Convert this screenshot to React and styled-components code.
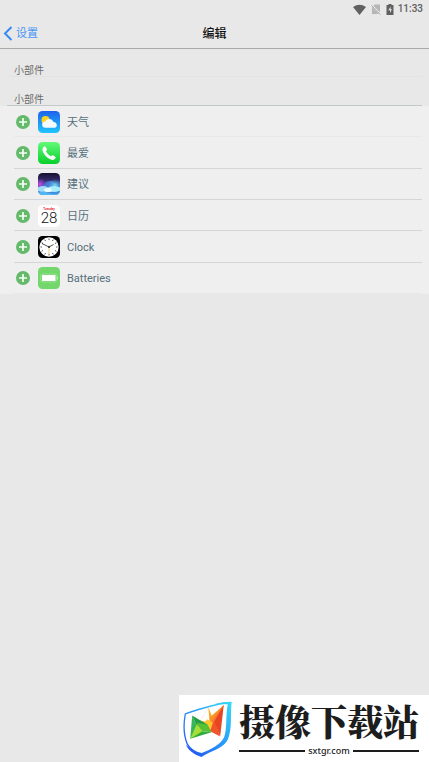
import React from 'react';
import styled, { createGlobalStyle } from 'styled-components';

const GlobalStyle = createGlobalStyle`
  * {
    box-sizing: border-box;
  }
  body {
    margin: 0;
    background: #e8e8e8;
    font-family: Roboto, "Noto Sans CJK SC", sans-serif;
  }
`;

const PageWrapper = styled.div`
  display: flex;
  flex-direction: column;
  width: 100%;
  min-height: 100vh;
`;

const StatusBar = styled.div`
  display: flex;
  align-items: center;
  justify-content: flex-end;
  height: 18px;
  padding-right: 6px;
  color: #606060;
  svg {
    display: block;
  }
`;

const StatusIcons = styled.div`
  display: flex;
  align-items: center;
  gap: 5px;
  margin-right: 4px;
`;

const Time = styled.span`
  font-size: 10px;
  font-weight: 500;
  line-height: 16px;
`;

const Header = styled.header`
  display: grid;
  grid-template-columns: 1fr auto 1fr;
  align-items: center;
  height: 31px;
  border-bottom: 1px solid #a9aaa9;
`;

const BackButton = styled.button`
  display: flex;
  align-items: center;
  justify-self: start;
  gap: 3px;
  padding: 0 0 0 3px;
  border: 0;
  background: none;
  color: #4897f5;
  font-family: inherit;
  font-size: 11px;
  line-height: 16px;
`;

const BackLabel = styled.span`
  padding-top: 2px;
`;

const Title = styled.h1`
  margin: 0;
  padding-top: 2px;
  color: #111;
  font-size: 12px;
  font-weight: 500;
  line-height: 16px;
`;

const SectionTitle = styled.h2`
  display: flex;
  align-items: flex-end;
  height: ${(props) => (props.$last ? 29 : 28)}px;
  margin: 0 7px;
  padding-left: 7px;
  border-bottom: 1px solid ${(props) => (props.$last ? '#c0caca' : '#e3e3e3')};
  color: #6b6b6b;
  font-size: 10px;
  font-weight: 400;
  line-height: 10px;
`;

const WidgetList = styled.ul`
  display: grid;
  grid-auto-rows: 1fr;
  min-height: 188px;
  margin: 0;
  padding: 0 7px 0 14px;
  background: #efefef;
  list-style: none;
`;

const WidgetRow = styled.li`
  display: flex;
  align-items: center;
  padding-top: 1px;
  border-bottom: 1px solid ${(props) => (props.$faint ? '#e8e8e8' : '#d3d6d8')};
`;

const WidgetName = styled.span`
  padding-top: 2px;
  color: #56707c;
  font-size: 11px;
  line-height: 16px;
`;

const AddButton = styled.button`
  display: flex;
  margin-right: 8px;
  padding: 0 0 0 2px;
  border: 0;
  background: none;
`;

const WidgetIcon = styled.svg`
  width: 22px;
  height: 22px;
  margin-right: 7px;
`;

const Banner = styled.aside`
  position: fixed;
  right: 0;
  bottom: 0;
  display: flex;
  align-items: center;
  gap: 7px;
  height: 67px;
  padding: 0 10px 0 4px;
  background: #fff;
  color: #1d1d1d;
`;

const BannerText = styled.div`
  display: flex;
  flex-direction: column;
  align-self: flex-start;
`;

const BannerName = styled.div`
  font-family: "Noto Serif CJK SC", "Noto Sans CJK SC", serif;
  font-size: 36px;
  font-weight: 900;
  line-height: 51px;
`;

const BannerSite = styled.div`
  display: flex;
  align-items: center;
  gap: 3px;
  font-family: "Noto Sans", sans-serif;
  font-size: 9px;
  font-weight: 500;
  line-height: 10px;
  &::before,
  &::after {
    content: "";
    flex: 1;
    height: 2px;
    background: #1d1d1d;
  }
`;

function Wifi() {
  return (
    <svg width="13" height="11" viewBox="0 0 13 11">
      <path d="M0 3Q6.500-1.500 13 3L6.500 11Z" fill="currentColor" />
    </svg>
  );
}

function NoSim() {
  return (
    <svg width="10" height="11" viewBox="0 0 10 11">
      <path d="M3.500.5H9V10H1V3Z" fill="#b5b5b5" />
      <path d="M0 .5L9.500 10.500" stroke="#e8e8e8" strokeWidth="2" />
      <path d="M.5 1.500L9 10.500" stroke="#a2a2a2" strokeWidth="1" />
    </svg>
  );
}

function Battery() {
  return (
    <svg width="8" height="11" viewBox="0 0 8 11">
      <path d="M2.500 0h3v1H7.500v10H.5V1h2z" fill="currentColor" />
      <path d="M4.700 2.500L2.300 6.300H4V9L5.900 5.200H4.500Z" fill="#e8e8e8" />
    </svg>
  );
}

function Plus() {
  return (
    <svg width="14" height="14" viewBox="0 0 14 14">
      <circle cx="7" cy="7" r="7" fill="#64b96a" />
      <path d="M7 3v8M3 7h8" stroke="#f5fff5" strokeWidth="1.700" />
    </svg>
  );
}

function Weather() {
  return (
    <>
      <defs>
        <linearGradient id="sky" x2="0" y2="1">
          <stop stopColor="#1d62ed" />
          <stop offset="1" stopColor="#1fc6fd" />
        </linearGradient>
      </defs>
      <rect width="22" height="22" rx="4.500" fill="url(#sky)" />
      <circle cx="7.500" cy="9" r="4" fill="#ffd21c" />
      <path d="M7.500 16.800a3.200 3.200 0 0 1-.3-6.400 4.600 4.600 0 0 1 8.300.5 3 3 0 0 1 1 5.900z" fill="#f3fbff" />
    </>
  );
}

function Phone() {
  return (
    <>
      <defs>
        <linearGradient id="call" x2="0" y2="1">
          <stop stopColor="#62fb78" />
          <stop offset="1" stopColor="#08cf2b" />
        </linearGradient>
      </defs>
      <rect width="22" height="22" rx="4.500" fill="url(#call)" />
      <path
        d="M5 5.500Q6.500 3.700 7.500 4.700L9 7.300Q9.200 8.300 7.800 9.200Q9.600 12.500 13 14.500Q14 13 15 13.300L17.500 15Q18.300 15.800 16.500 17.300C14 19 10.500 16.700 8.300 14.500C5.500 11.700 3.500 8 5 5.500Z"
        fill="#fff"
      />
    </>
  );
}

function Siri() {
  return (
    <>
      <defs>
        <linearGradient id="night" x2="0" y2="1">
          <stop stopColor="#15112f" />
          <stop offset=".3" stopColor="#302861" />
          <stop offset=".6" stopColor="#4f62bd" />
          <stop offset="1" stopColor="#3f9ce8" />
        </linearGradient>
        <radialGradient id="pink">
          <stop stopColor="#d644e4" />
          <stop offset="1" stopColor="#8a3bd0" stopOpacity="0" />
        </radialGradient>
        <radialGradient id="cyan">
          <stop stopColor="#6ce0f0" />
          <stop offset="1" stopColor="#4a9ae0" stopOpacity="0" />
        </radialGradient>
        <clipPath id="tile">
          <rect width="22" height="22" rx="4.500" />
        </clipPath>
      </defs>
      <g clipPath="url(#tile)">
        <rect width="22" height="22" fill="url(#night)" />
        <ellipse cx="2" cy="11" rx="6" ry="6" fill="url(#pink)" />
        <path d="M5 14Q7 7 13 8Q18 9 19 15Z" fill="#4b7fe0" opacity=".8" />
        <ellipse cx="17" cy="12" rx="8" ry="6" fill="url(#cyan)" />
        <ellipse cx="5" cy="16" rx="6" ry="3" fill="#9fdcf8" />
        <ellipse cx="16" cy="16" rx="7" ry="3" fill="#a8eefa" />
        <ellipse cx="10" cy="17" rx="4" ry="2" fill="#e6fbff" />
        <path d="M0 20Q5 17 11 20T22 19V22H0Z" fill="#55b4f2" />
      </g>
    </>
  );
}

function Calendar() {
  return (
    <>
      <rect width="22" height="22" rx="4.500" fill="#fff" />
      <text x="11" y="4.500" textAnchor="middle" fontSize="3" fontWeight="700" fill="#e3262c">Tuesday</text>
      <text x="11" y="18" textAnchor="middle" fontSize="15" fontWeight="300" fill="#111">28</text>
    </>
  );
}

const HOURS = [0, 30, 60, 90, 120, 150, 180, 210, 240, 270, 300, 330];

function ClockFace() {
  return (
    <>
      <rect width="22" height="22" rx="4.500" fill="#000" />
      <circle cx="11" cy="11" r="9.700" fill="#fff" />
      {HOURS.map((angle) => (
        <path key={angle} d="M11 2.500v1.500" stroke="#333" strokeWidth=".8" transform={`rotate(${angle} 11 11)`} />
      ))}
      <path d="M4 7.500L11 11L15.500 8.500" fill="none" stroke="#222" strokeWidth=".8" />
      <path d="M11 9.500V19" stroke="#dfb34a" strokeWidth=".7" />
      <circle cx="11" cy="11" r="1" fill="#222" />
    </>
  );
}

function BatteryTile() {
  return (
    <>
      <rect width="22" height="22" rx="4.500" fill="#73d76c" />
      <rect x="2.500" y="7" width="16" height="8" rx="1.500" fill="none" stroke="#9be596" strokeWidth=".7" />
      <rect x="4" y="8" width="13.500" height="6" fill="#fff" />
      <path d="M19.500 9.500v3" stroke="#b5edb0" />
    </>
  );
}

function Shield() {
  return (
    <svg width="49" height="56" viewBox="23 29 149 170">
      <defs>
        <linearGradient id="rim" x1="1" y1="0" x2="0" y2="1">
          <stop stopColor="#35dcf5" />
          <stop offset=".5" stopColor="#2796fa" />
          <stop offset="1" stopColor="#214cf0" />
        </linearGradient>
      </defs>
      <path
        d="M160 35C125 36 82 50 30 68C25 96 24 132 36 160C46 176 62 186 79 194"
        fill="none"
        stroke="url(#rim)"
        strokeWidth="4"
      />
      <path d="M171 31C166 75 174 112 159 147C148 172 108 181 79 199C58 192 40 181 32 162C48 177 64 184 80 187C110 174 136 163 148 139C158 113 152 76 159 39L120 38Q145 31 171 31Z" fill="url(#rim)" />
      <path d="M100 48L76 88L108 123L118 92Z" fill="#fba92a" />
      <path d="M147 41L87 94L108 123L120 94Z" fill="#fa9427" />
      <path d="M147 41L108 92L121 104Z" fill="#fb7b2c" />
      <path d="M147 41L117 93L136 137Z" fill="#e94525" />
      <path d="M88 112L119 92L136 137Z" fill="#f0552a" />
      <path d="M100 48L76 88L104 96Z" fill="#fff" />
      <path d="M96 84L84 100L107 116L114 95Z" fill="#ffc72b" />
      <path d="M51 73L45 144L66 108Z" fill="#35b558" />
      <path d="M51 73L66 108L98 101Z" fill="#219d45" />
      <path d="M65 95L98 101L110 124L78 120Z" fill="#58c035" />
      <path d="M65 99L45 144L110 124L81 121Z" fill="#2fae3e" />
      <path d="M65 99L45 144L82 121Z" fill="#a5de38" />
    </svg>
  );
}

const WIDGETS = [
  { name: '天气', Icon: Weather, faint: true },
  { name: '最爱', Icon: Phone },
  { name: '建议', Icon: Siri },
  { name: '日历', Icon: Calendar },
  { name: 'Clock', Icon: ClockFace },
  { name: 'Batteries', Icon: BatteryTile, faint: true },
];

function App() {
  return (
    <PageWrapper>
      <GlobalStyle />
      <StatusBar>
        <StatusIcons>
          <Wifi />
          <NoSim />
          <Battery />
        </StatusIcons>
        <Time>11:33</Time>
      </StatusBar>
      <Header>
        <BackButton type="button">
          <svg width="10" height="15" viewBox="0 0 10 15">
            <path d="M8.500 1L2 7.500L8.500 14" fill="none" stroke="#348af5" strokeWidth="2" />
          </svg>
          <BackLabel>设置</BackLabel>
        </BackButton>
        <Title>编辑</Title>
      </Header>
      <main>
        <SectionTitle>小部件</SectionTitle>
        <SectionTitle $last>小部件</SectionTitle>
        <WidgetList>
          {WIDGETS.map(({ name, Icon, faint }) => (
            <WidgetRow key={name} $faint={faint}>
              <AddButton type="button" aria-label={name}>
                <Plus />
              </AddButton>
              <WidgetIcon viewBox="0 0 22 22" aria-hidden="true">
                <Icon />
              </WidgetIcon>
              <WidgetName>{name}</WidgetName>
            </WidgetRow>
          ))}
        </WidgetList>
      </main>
      <Banner>
        <Shield />
        <BannerText>
          <BannerName>摄像下载站</BannerName>
          <BannerSite>sxtgr.com</BannerSite>
        </BannerText>
      </Banner>
    </PageWrapper>
  );
}

export default App;
